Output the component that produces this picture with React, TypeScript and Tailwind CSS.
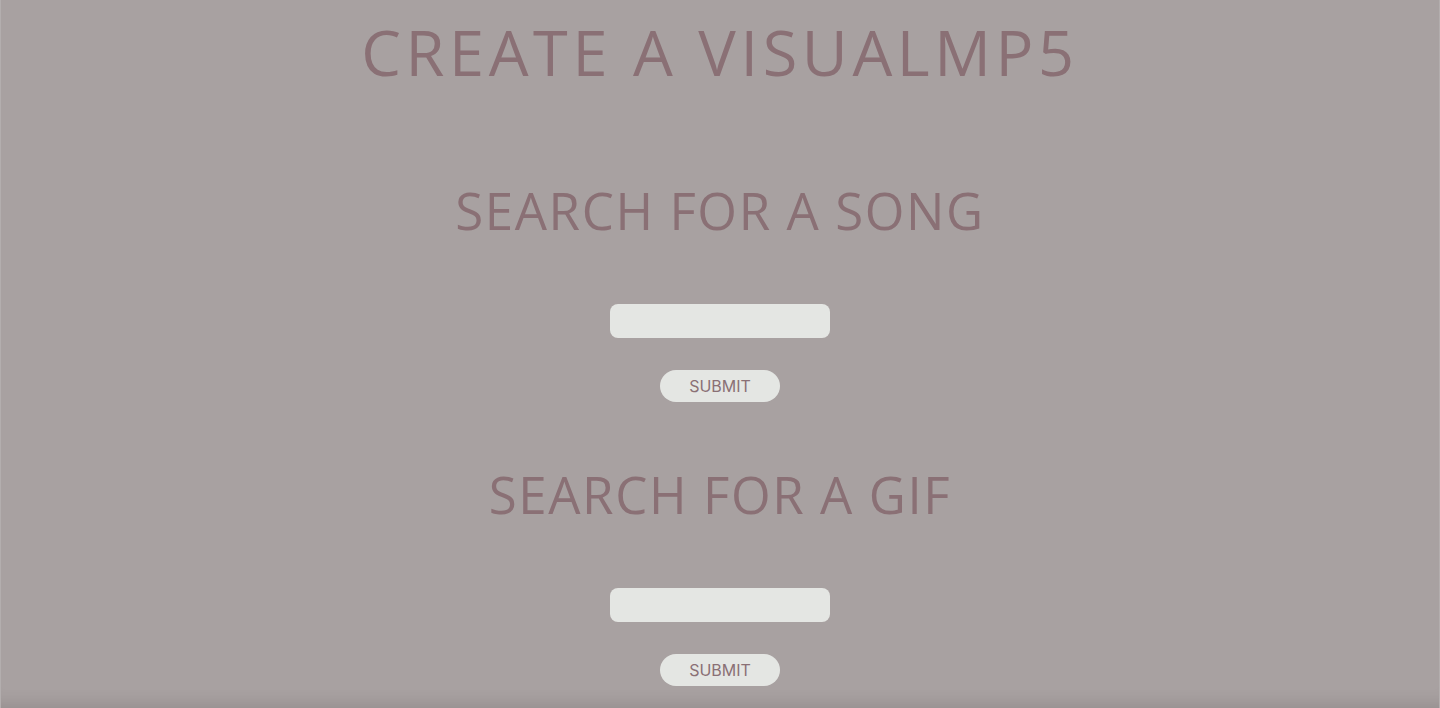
import { useState } from "react";

function SearchForm({ title, mt }: { title: string; mt: string }) {
  const [value, setValue] = useState("");
  return (
    <form
      className={`flex flex-col items-center ${mt}`}
      onSubmit={(e) => e.preventDefault()}
    >
      <h2 className="text-[51px] font-normal leading-[60px] tracking-[1.6px] text-[#8a7075] [font-family:'Open_Sans',sans-serif]">
        {title}
      </h2>
      <input
        value={value}
        onChange={(e) => setValue(e.target.value)}
        className="mt-[64px] h-[34px] w-[220px] rounded-lg bg-[#e4e6e3] px-3 text-[#8a7075] outline-none"
      />
      <button
        type="submit"
        className="mt-8 h-8 w-[120px] rounded-full bg-[#e4e6e3] text-base text-[#8a7075] [font-family:Inter,sans-serif]"
      >
        SUBMIT
      </button>
    </form>
  );
}

export default function App() {
  return (
    <div className="flex h-[708px] flex-col items-center overflow-hidden border-x border-[#b3aeae] bg-[#a8a1a1] shadow-[inset_0_-18px_16px_-14px_rgba(0,0,0,0.12)]">
      <h1 className="mt-[14px] text-[63px] font-normal leading-[76px] tracking-[4.6px] text-[#8a7075] [font-family:'Open_Sans',sans-serif]">
        CREATE A VISUALMP5
      </h1>
      <SearchForm title="SEARCH FOR A SONG" mt="mt-[90px]" />
      <SearchForm title="SEARCH FOR A GIF" mt="mt-[62px]" />
    </div>
  );
}
